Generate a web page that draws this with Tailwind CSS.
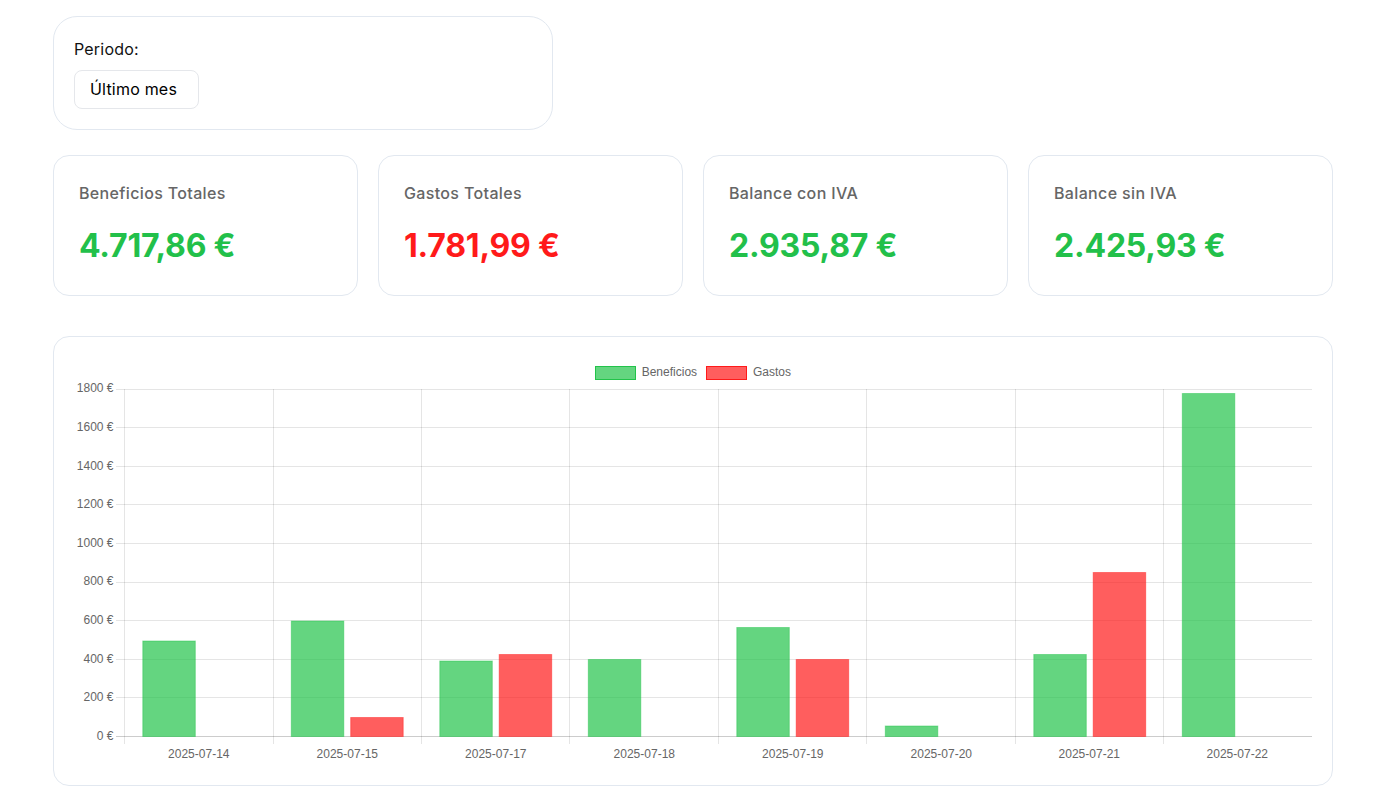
<!DOCTYPE html>
<html lang="es">
<head>
    <meta charset="UTF-8">
    <meta name="viewport" content="width=device-width, initial-scale=1.0">
    <title>Dashboard</title>
    <script src="https://cdn.jsdelivr.net/npm/@tailwindcss/browser@4"></script>
</head>
<body class="bg-white font-['Inter',sans-serif]">
    <div class="px-[53px] pt-4">
        <!-- Filtro -->
        <div class="w-[500px] h-[114px] mb-[25px] pt-5 px-5 bg-white border border-[#e2e8f0] rounded-3xl">
            <label for="periodo" class="block h-6 mb-[9px] text-[16px] leading-6 tracking-[0.2px] text-[#111]">Periodo:</label>
            <select id="periodo" class="block w-[125px] h-[39px] pl-[15px] pb-[2px] appearance-none bg-white border border-[#e5e7eb] rounded-lg text-[16px] tracking-[0.2px] text-black">
                <option>Último mes</option>
            </select>
        </div>

        <!-- Totales -->
        <div class="grid grid-cols-4 gap-5 mb-10">
            <div class="h-[141px] pt-[25px] px-[25px] border border-[#e2e8f0] rounded-2xl">
                <h3 class="h-6 mb-[17px] text-[16px] leading-6 font-medium tracking-[0.35px] text-[#666]">Beneficios Totales</h3>
                <p class="text-[32px] leading-[48px] font-bold tracking-[-0.2px] text-[#22c04a]">4.717,86 €</p>
            </div>
            <div class="h-[141px] pt-[25px] px-[25px] border border-[#e2e8f0] rounded-2xl">
                <h3 class="h-6 mb-[17px] text-[16px] leading-6 font-medium tracking-[0.35px] text-[#666]">Gastos Totales</h3>
                <p class="text-[32px] leading-[48px] font-bold tracking-[-0.2px] text-[#ff1a1a]">1.781,99 €</p>
            </div>
            <div class="h-[141px] pt-[25px] px-[25px] border border-[#e2e8f0] rounded-2xl">
                <h3 class="h-6 mb-[17px] text-[16px] leading-6 font-medium tracking-[0.35px] text-[#666]">Balance con IVA</h3>
                <p class="text-[32px] leading-[48px] font-bold tracking-[-0.2px] text-[#22c04a]">2.935,87 €</p>
            </div>
            <div class="h-[141px] pt-[25px] px-[25px] border border-[#e2e8f0] rounded-2xl">
                <h3 class="h-6 mb-[17px] text-[16px] leading-6 font-medium tracking-[0.35px] text-[#666]">Balance sin IVA</h3>
                <p class="text-[32px] leading-[48px] font-bold tracking-[-0.2px] text-[#22c04a]">2.425,93 €</p>
            </div>
        </div>

        <!-- Grafico -->
        <div class="h-[450px] border border-[#e2e8f0] rounded-2xl">
            <svg class="block w-[1278px] h-[448px] font-['Liberation_Sans',sans-serif] text-[12px] fill-[#666]" viewBox="54 337 1278 448">
                <!-- leyenda -->
                <rect x="595.5" y="366.5" width="40" height="13" fill="#22c34a" fill-opacity=".7" stroke="#22c34a"/>
                <text x="641.7" y="376">Beneficios</text>
                <rect x="706.5" y="366.5" width="40" height="13" fill="#ff1a1a" fill-opacity=".7" stroke="#ff1a1a"/>
                <text x="753" y="376">Gastos</text>

                <!-- rejilla -->
                <g stroke="#000" stroke-opacity=".1">
                    <path d="M116 389.5H1312M116 427.5H1312M116 466.5H1312M116 504.5H1312M116 543.5H1312M116 582.5H1312M116 620.5H1312M116 659.5H1312M116 697.5H1312"/>
                    <path d="M124.5 389V744M273.5 389V744M421.5 389V744M569.5 389V744M718.5 389V744M866.5 389V744M1015.5 389V744M1163.5 389V744"/>
                </g>
                <path d="M116 736.5H1312" stroke="#000" stroke-opacity=".2"/>

                <!-- eje y -->
                <g text-anchor="end">
                    <text x="113.5" y="392">1800 €</text>
                    <text x="113.5" y="431">1600 €</text>
                    <text x="113.5" y="470">1400 €</text>
                    <text x="113.5" y="508">1200 €</text>
                    <text x="113.5" y="547">1000 €</text>
                    <text x="113.5" y="585">800 €</text>
                    <text x="113.5" y="624">600 €</text>
                    <text x="113.5" y="663">400 €</text>
                    <text x="113.5" y="701">200 €</text>
                    <text x="113.5" y="740">0 €</text>
                </g>

                <!-- eje x -->
                <g text-anchor="middle">
                    <text x="198.8" y="758">2025-07-14</text>
                    <text x="347.3" y="758">2025-07-15</text>
                    <text x="495.8" y="758">2025-07-17</text>
                    <text x="644.3" y="758">2025-07-18</text>
                    <text x="792.8" y="758">2025-07-19</text>
                    <text x="941.3" y="758">2025-07-20</text>
                    <text x="1089.3" y="758">2025-07-21</text>
                    <text x="1237.3" y="758">2025-07-22</text>
                </g>

                <!-- beneficios -->
                <g fill="#22c34a" fill-opacity=".7" stroke="#22c34a" stroke-opacity=".45">
                    <rect x="142.8" y="641" width="52.5" height="95.5"/>
                    <rect x="291.3" y="621" width="52.5" height="115.5"/>
                    <rect x="439.8" y="661" width="52.5" height="75.5"/>
                    <rect x="588.3" y="659.5" width="52.5" height="77"/>
                    <rect x="736.8" y="627.5" width="52.5" height="109"/>
                    <rect x="885.3" y="726" width="52.5" height="10.5"/>
                    <rect x="1033.8" y="654.5" width="52.5" height="82"/>
                    <rect x="1182.3" y="393.5" width="52.5" height="343"/>
                </g>

                <!-- gastos -->
                <g fill="#ff1a1a" fill-opacity=".7" stroke="#ff1a1a" stroke-opacity=".45">
                    <rect x="350.7" y="717.5" width="52.5" height="19"/>
                    <rect x="499.2" y="654.5" width="52.5" height="82"/>
                    <rect x="796.2" y="659.5" width="52.5" height="77"/>
                    <rect x="1093.2" y="572.5" width="52.5" height="164"/>
                </g>
            </svg>
        </div>
    </div>
</body>
</html>
